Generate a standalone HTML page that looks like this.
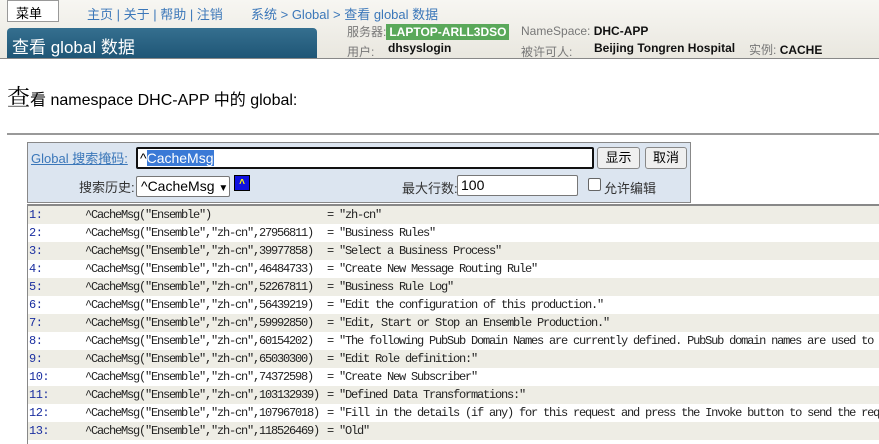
<!DOCTYPE html>
<html><head><meta charset="utf-8"><style>
*{margin:0;padding:0;box-sizing:border-box}
body{width:879px;height:436px;overflow:hidden;background:#fff;font-family:"Liberation Sans","Noto Sans CJK SC",sans-serif;font-size:12px;position:relative}
.abs{position:absolute;white-space:nowrap}
#hdr{position:absolute;left:0;top:0;width:879px;height:59px;background:linear-gradient(#f7f6f2,#e9e7df);border-bottom:1px solid #888}
#menu{left:7px;top:0;width:52px;height:22px;border:1px solid #999;background:#fff;font-size:13px;padding:2px 0 0 8px}
.lnk{color:#3b77b9;font-size:13px}
#tab{left:7px;top:28px;width:310px;height:30px;border-radius:4px 4px 0 0;background:linear-gradient(#356f8f,#1f5676);color:#fff;font-size:17px;padding:5px 0 0 5px}
.lbl{color:#777;font-size:12px}
.val{color:#111;font-weight:bold;font-size:12px}
#srv{background:#5aa85a;color:#fff;font-weight:bold;padding:1px 3px}
.f{font-size:13px;color:#333}
.btn{border:1px solid #888;border-radius:3px;background:#efefef;font-size:13px;text-align:center;line-height:20px;color:#000}
#tbl{position:absolute;left:27px;top:204px;width:860px;height:240px;border-top:2px solid #888;border-left:1px solid #888}
.r{height:18px;font-family:"Liberation Mono",monospace;font-size:12px;letter-spacing:-1.2px;color:#222;position:relative;white-space:pre;line-height:18px}
.r:nth-child(odd){background:#eeede5}
.r span{position:absolute;top:0;line-height:18px;height:18px}
.r span.n{left:1px;top:0;color:#1a2ea0;font-family:"Liberation Mono",monospace;letter-spacing:-0.5px;font-size:12px}
.k{left:57px}.e{left:299px}
</style></head><body>
<div id="hdr"></div>
<div class="abs" id="menu">菜单</div>
<div class="abs lnk" style="left:87px;top:4px">主页 | 关于 | 帮助 | 注销</div>
<div class="abs lnk" style="left:251px;top:4px">系统 &gt; Global &gt; 查看 global 数据</div>
<div class="abs" id="tab">查看 global 数据</div>
<div class="abs" style="left:347px;top:23px"><span class="lbl">服务器:</span><span id="srv">LAPTOP-ARLL3DSO</span></div>
<div class="abs" style="left:521px;top:24px"><span class="lbl">NameSpace:</span> <span class="val">DHC-APP</span></div>
<div class="abs lbl" style="left:347px;top:43px">用户:</div>
<div class="abs val" style="left:388px;top:41px">dhsyslogin</div>
<div class="abs lbl" style="left:521px;top:43px">被许可人:</div>
<div class="abs val" style="left:594px;top:41px">Beijing Tongren Hospital</div>
<div class="abs" style="left:749px;top:41px"><span class="lbl">实例:</span> <span class="val">CACHE</span></div>
<div class="abs" style="left:7px;top:79px;font-size:16px"><span style="font-size:23px;font-family:'Noto Serif CJK SC',serif">查</span>看 namespace DHC-APP 中的 global:</div>
<div style="position:absolute;left:7px;top:133px;width:872px;border-top:2px solid #999"></div>

<div class="abs" style="left:27px;top:142px;width:664px;height:61px;border:1px solid #888;background:#dce5f0"></div>
<div class="abs" style="left:31px;top:148px;color:#3b77b9;font-size:13px;text-decoration:underline">Global 搜索掩码:</div>
<div class="abs" style="left:136px;top:147px;width:458px;height:22px;border:2px solid #111;border-radius:2px;background:#fff;font-size:14px;padding:1px 0 0 2px">^<span style="background:#3a79d6;color:#fff">CacheMsg</span></div>
<div class="abs btn" style="left:597px;top:147px;width:43px;height:22px">显示</div>
<div class="abs btn" style="left:645px;top:147px;width:42px;height:22px">取消</div>
<div class="abs f" style="left:79px;top:177px">搜索历史:</div>
<div class="abs" style="left:136px;top:176px;width:94px;height:21px;border:1px solid #777;border-radius:2px;background:#fff;font-size:14px;padding:1px 0 0 4px">^CacheMsg <span style="font-size:10px">&#9660;</span></div>
<div class="abs" style="left:234px;top:175px;width:16px;height:16px;background:#1010e0;border:1px solid #000;color:#ff0;font-size:10px;text-align:center;line-height:14px;font-weight:bold">&#708;</div>
<div class="abs f" style="left:402px;top:178px">最大行数:</div>
<div class="abs" style="left:457px;top:175px;width:121px;height:21px;border:1px solid #777;border-radius:2px;background:#fff;font-size:14px;padding:1px 0 0 3px">100</div>
<div class="abs" style="left:588px;top:178px;width:13px;height:13px;border:1px solid #666;border-radius:2px;background:#fff"></div>
<div class="abs f" style="left:604px;top:178px">允许编辑</div>

<div id="tbl">
<div class="r"><span class="n">1:</span><span class="k">^CacheMsg("Ensemble")</span><span class="e">= "zh-cn"</span></div>
<div class="r"><span class="n">2:</span><span class="k">^CacheMsg("Ensemble","zh-cn",27956811)</span><span class="e">= "Business Rules"</span></div>
<div class="r"><span class="n">3:</span><span class="k">^CacheMsg("Ensemble","zh-cn",39977858)</span><span class="e">= "Select a Business Process"</span></div>
<div class="r"><span class="n">4:</span><span class="k">^CacheMsg("Ensemble","zh-cn",46484733)</span><span class="e">= "Create New Message Routing Rule"</span></div>
<div class="r"><span class="n">5:</span><span class="k">^CacheMsg("Ensemble","zh-cn",52267811)</span><span class="e">= "Business Rule Log"</span></div>
<div class="r"><span class="n">6:</span><span class="k">^CacheMsg("Ensemble","zh-cn",56439219)</span><span class="e">= "Edit the configuration of this production."</span></div>
<div class="r"><span class="n">7:</span><span class="k">^CacheMsg("Ensemble","zh-cn",59992850)</span><span class="e">= "Edit, Start or Stop an Ensemble Production."</span></div>
<div class="r"><span class="n">8:</span><span class="k">^CacheMsg("Ensemble","zh-cn",60154202)</span><span class="e">= "The following PubSub Domain Names are currently defined. PubSub domain names are used to</span></div>
<div class="r"><span class="n">9:</span><span class="k">^CacheMsg("Ensemble","zh-cn",65030300)</span><span class="e">= "Edit Role definition:"</span></div>
<div class="r"><span class="n">10:</span><span class="k">^CacheMsg("Ensemble","zh-cn",74372598)</span><span class="e">= "Create New Subscriber"</span></div>
<div class="r"><span class="n">11:</span><span class="k">^CacheMsg("Ensemble","zh-cn",103132939)</span><span class="e">= "Defined Data Transformations:"</span></div>
<div class="r"><span class="n">12:</span><span class="k">^CacheMsg("Ensemble","zh-cn",107967018)</span><span class="e">= "Fill in the details (if any) for this request and press the Invoke button to send the req</span></div>
<div class="r"><span class="n">13:</span><span class="k">^CacheMsg("Ensemble","zh-cn",118526469)</span><span class="e">= "Old"</span></div>
</div>
</body></html>
